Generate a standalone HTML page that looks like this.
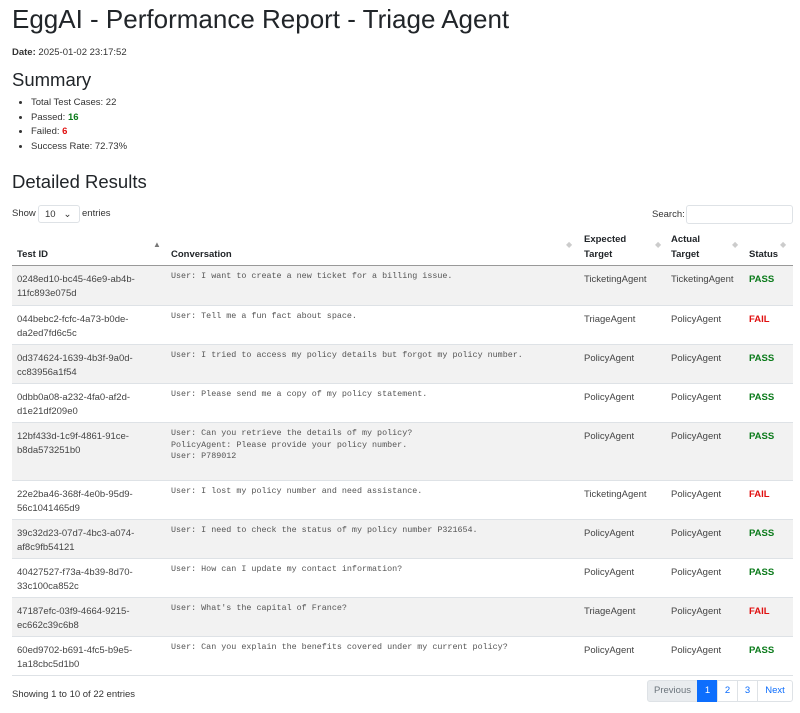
<!DOCTYPE html>
<html><head><meta charset="utf-8"><style>
*{margin:0;padding:0;box-sizing:border-box}
body{width:800px;height:713px;background:#fff;font-family:"Liberation Sans",sans-serif;color:#212529;position:relative;overflow:hidden}
.a{position:absolute;white-space:nowrap}
h1{position:absolute;left:12px;top:4px;font-size:26px;font-weight:400}
h2{position:absolute;left:12px;font-size:18.5px;font-weight:400}
.s{font-size:9.5px;color:#333}
ul{position:absolute;left:31px;top:96px;font-size:9.5px;line-height:14.5px;color:#333}
.row{position:absolute;left:12px;width:781px;border-top:1px solid #dee2e6;font-size:9.5px;color:#444}
.row.g{background:#f2f2f2}
.c{position:absolute;top:7px;line-height:14px}
.m{font-family:"Liberation Mono",monospace;font-size:8.4px;line-height:11.5px;top:5px;color:#555}
.p{color:#0a7a1a;font-weight:bold}.f{color:#e01010;font-weight:bold}
.th{position:absolute;font-size:9.5px;font-weight:bold;line-height:15px}
.ar{position:absolute;color:#ccc;font-size:8px}
.pg{position:absolute;top:680px;height:22px;font-size:9.5px;line-height:20px;text-align:center;border:1px solid #dee2e6;color:#0d6efd}
</style></head><body>
<h1>EggAI - Performance Report - Triage Agent</h1>
<div class="a s" style="left:12px;top:47px"><b>Date:</b> 2025-01-02 23:17:52</div>
<h2 style="top:69px">Summary</h2>
<ul><li>Total Test Cases: 22</li><li>Passed: <span class="p">16</span></li><li>Failed: <span class="f">6</span></li><li>Success Rate: 72.73%</li></ul>
<h2 style="top:171px">Detailed Results</h2>
<div class="a s" style="left:12px;top:208px">Show</div>
<div class="a s" style="left:38px;top:205px;width:42px;height:18px;border:1px solid #dee2e6;border-radius:3px;padding:3px 0 0 6px">10 &nbsp; ⌄</div>
<div class="a s" style="left:82px;top:208px">entries</div>
<div class="a s" style="left:652px;top:209px">Search:</div>
<div class="a" style="left:686px;top:205px;width:107px;height:19px;border:1px solid #dee2e6;border-radius:3px"></div>
<div class="th" style="left:17px;top:247px">Test ID</div>
<div class="ar" style="left:153px;top:240px;color:#777">▲</div>
<div class="th" style="left:171px;top:247px">Conversation</div>
<div class="ar" style="left:566px;top:240px">◆</div>
<div class="th" style="left:584px;top:232px">Expected<br>Target</div>
<div class="ar" style="left:655px;top:240px">◆</div>
<div class="th" style="left:671px;top:232px">Actual<br>Target</div>
<div class="ar" style="left:732px;top:240px">◆</div>
<div class="th" style="left:749px;top:247px">Status</div>
<div class="ar" style="left:780px;top:240px">◆</div>

<div class="row g" style="top:265px;height:40px;border-top:1px solid #999"><div class="c" style="left:5px">0248ed10-bc45-46e9-ab4b-<br>11fc893e075d</div><div class="c m" style="left:159px">User: I want to create a new ticket for a billing issue.</div><div class="c" style="left:572px">TicketingAgent</div><div class="c" style="left:659px">TicketingAgent</div><div class="c p" style="left:737px">PASS</div></div>
<div class="row" style="top:305px;height:39px"><div class="c" style="left:5px">044bebc2-fcfc-4a73-b0de-<br>da2ed7fd6c5c</div><div class="c m" style="left:159px">User: Tell me a fun fact about space.</div><div class="c" style="left:572px">TriageAgent</div><div class="c" style="left:659px">PolicyAgent</div><div class="c f" style="left:737px">FAIL</div></div>
<div class="row g" style="top:344px;height:39px"><div class="c" style="left:5px">0d374624-1639-4b3f-9a0d-<br>cc83956a1f54</div><div class="c m" style="left:159px">User: I tried to access my policy details but forgot my policy number.</div><div class="c" style="left:572px">PolicyAgent</div><div class="c" style="left:659px">PolicyAgent</div><div class="c p" style="left:737px">PASS</div></div>
<div class="row" style="top:383px;height:39px"><div class="c" style="left:5px">0dbb0a08-a232-4fa0-af2d-<br>d1e21df209e0</div><div class="c m" style="left:159px">User: Please send me a copy of my policy statement.</div><div class="c" style="left:572px">PolicyAgent</div><div class="c" style="left:659px">PolicyAgent</div><div class="c p" style="left:737px">PASS</div></div>
<div class="row g" style="top:422px;height:58px"><div class="c" style="left:5px">12bf433d-1c9f-4861-91ce-<br>b8da573251b0</div><div class="c m" style="left:159px">User: Can you retrieve the details of my policy?<br>PolicyAgent: Please provide your policy number.<br>User: P789012</div><div class="c" style="left:572px">PolicyAgent</div><div class="c" style="left:659px">PolicyAgent</div><div class="c p" style="left:737px">PASS</div></div>
<div class="row" style="top:480px;height:39px"><div class="c" style="left:5px">22e2ba46-368f-4e0b-95d9-<br>56c1041465d9</div><div class="c m" style="left:159px">User: I lost my policy number and need assistance.</div><div class="c" style="left:572px">TicketingAgent</div><div class="c" style="left:659px">PolicyAgent</div><div class="c f" style="left:737px">FAIL</div></div>
<div class="row g" style="top:519px;height:39px"><div class="c" style="left:5px">39c32d23-07d7-4bc3-a074-<br>af8c9fb54121</div><div class="c m" style="left:159px">User: I need to check the status of my policy number P321654.</div><div class="c" style="left:572px">PolicyAgent</div><div class="c" style="left:659px">PolicyAgent</div><div class="c p" style="left:737px">PASS</div></div>
<div class="row" style="top:558px;height:39px"><div class="c" style="left:5px">40427527-f73a-4b39-8d70-<br>33c100ca852c</div><div class="c m" style="left:159px">User: How can I update my contact information?</div><div class="c" style="left:572px">PolicyAgent</div><div class="c" style="left:659px">PolicyAgent</div><div class="c p" style="left:737px">PASS</div></div>
<div class="row g" style="top:597px;height:39px"><div class="c" style="left:5px">47187efc-03f9-4664-9215-<br>ec662c39c6b8</div><div class="c m" style="left:159px">User: What's the capital of France?</div><div class="c" style="left:572px">TriageAgent</div><div class="c" style="left:659px">PolicyAgent</div><div class="c f" style="left:737px">FAIL</div></div>
<div class="row" style="top:636px;height:40px;border-bottom:1px solid #dee2e6"><div class="c" style="left:5px">60ed9702-b691-4fc5-b9e5-<br>1a18cbc5d1b0</div><div class="c m" style="left:159px">User: Can you explain the benefits covered under my current policy?</div><div class="c" style="left:572px">PolicyAgent</div><div class="c" style="left:659px">PolicyAgent</div><div class="c p" style="left:737px">PASS</div></div>

<div class="a s" style="left:12px;top:689px">Showing 1 to 10 of 22 entries</div>
<div class="pg" style="left:647px;width:51px;background:#e9ecef;color:#6c757d;border-radius:3px 0 0 3px">Previous</div>
<div class="pg" style="left:697px;width:21px;background:#0d6efd;color:#fff;border-color:#0d6efd">1</div>
<div class="pg" style="left:717px;width:21px">2</div>
<div class="pg" style="left:737px;width:21px">3</div>
<div class="pg" style="left:757px;width:36px;border-radius:0 3px 3px 0">Next</div>
</body></html>
